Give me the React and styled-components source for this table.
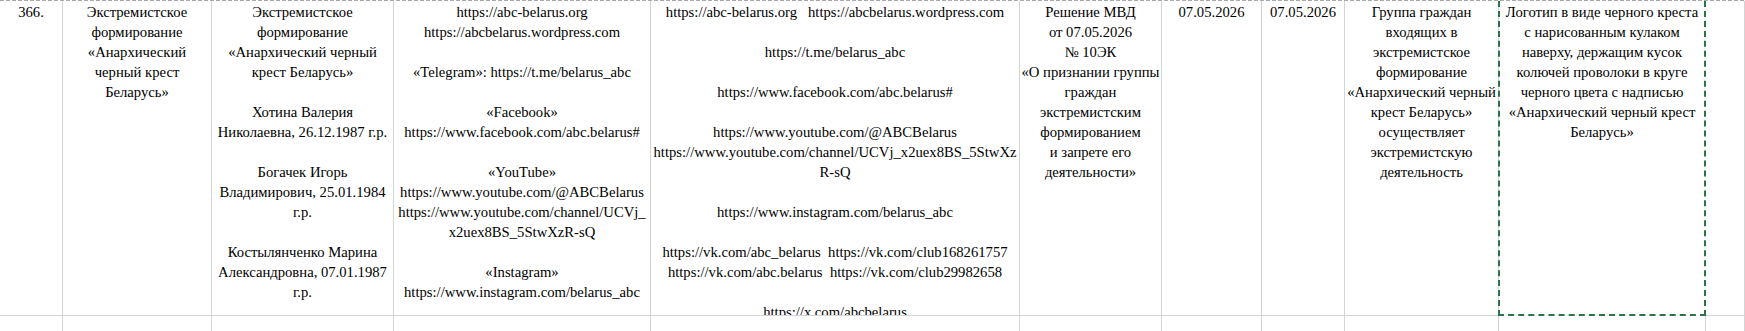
import React from 'react';
import styled, { createGlobalStyle } from 'styled-components';

const GlobalStyle = createGlobalStyle`
  html, body {
    margin: 0;
    padding: 0;
    background: #fff;
  }
  body {
    font-family: "Liberation Serif", "Times New Roman", "DejaVu Serif", serif;
    color: #000;
    overflow: hidden;
  }
`;

const COLS = '63px 149px 182px 257px 369px 142px 100px 83px 154px 207px 1fr';

const Sheet = styled.div`
  width: 1745px;
  height: 331px;
  overflow: hidden;
`;

const TopEdge = styled.div`
  height: 1px;
  background: repeating-linear-gradient(
    to right,
    #a9a9a9 0,
    #a9a9a9 4px,
    transparent 4px,
    transparent 6px
  );
`;

const Row = styled.div`
  display: grid;
  grid-template-columns: ${COLS};
  height: ${(p) => p.$height}px;
`;

const Cell = styled.div`
  box-sizing: border-box;
  border-right: 1px solid #d4d4d4;
  border-bottom: 1px solid #d4d4d4;
  padding-top: 1px;
  display: flex;
  flex-direction: column;
  align-items: center;
  overflow: hidden;
  font-family: "Liberation Serif", "Times New Roman", "DejaVu Serif", serif;
  font-size: 14.67px;
  line-height: 20px;
  color: #000;
  text-align: center;

  ${(p) =>
    p.$selected &&
    `
    border: 2px dashed #2b7448;
    border-top: none;
    margin-left: -1px;
    padding-top: 1px;
  `}
`;

const Line = styled.div`
  white-space: pre;
  min-height: 20px;
`;

const CellText = ({ lines, selected }) => (
  <Cell $selected={selected}>
    {lines.map((t, i) => (
      <Line key={i}>{t}</Line>
    ))}
  </Cell>
);

const record = [
  ['366.'],
  ['Экстремистское', 'формирование', '«Анархический', 'черный крест', 'Беларусь»'],
  [
    'Экстремистское',
    'формирование',
    '«Анархический черный',
    'крест Беларусь»',
    '',
    'Хотина Валерия',
    'Николаевна, 26.12.1987 г.р.',
    '',
    'Богачек Игорь',
    'Владимирович, 25.01.1984',
    'г.р.',
    '',
    'Костылянченко Марина',
    'Александровна, 07.01.1987',
    'г.р.',
  ],
  [
    'https://abc-belarus.org',
    'https://abcbelarus.wordpress.com',
    '',
    '«Telegram»: https://t.me/belarus_abc',
    '',
    '«Facebook»',
    'https://www.facebook.com/abc.belarus#',
    '',
    '«YouTube»',
    'https://www.youtube.com/@ABCBelarus',
    'https://www.youtube.com/channel/UCVj_',
    'x2uex8BS_5StwXzR-sQ',
    '',
    '«Instagram»',
    'https://www.instagram.com/belarus_abc',
  ],
  [
    'https://abc-belarus.org   https://abcbelarus.wordpress.com',
    '',
    'https://t.me/belarus_abc',
    '',
    'https://www.facebook.com/abc.belarus#',
    '',
    'https://www.youtube.com/@ABCBelarus',
    'https://www.youtube.com/channel/UCVj_x2uex8BS_5StwXz',
    'R-sQ',
    '',
    'https://www.instagram.com/belarus_abc',
    '',
    'https://vk.com/abc_belarus  https://vk.com/club168261757',
    'https://vk.com/abc.belarus  https://vk.com/club29982658',
    '',
    'https://x.com/abcbelarus',
  ],
  [
    'Решение МВД',
    'от 07.05.2026',
    '№ 10ЭК',
    '«О признании группы',
    'граждан',
    'экстремистским',
    'формированием',
    'и запрете его',
    'деятельности»',
  ],
  ['07.05.2026'],
  ['07.05.2026'],
  [
    'Группа граждан',
    'входящих в',
    'экстремистское',
    'формирование',
    '«Анархический черный',
    'крест Беларусь»',
    'осуществляет',
    'экстремистскую',
    'деятельность',
  ],
  [
    'Логотип в виде черного креста',
    'с нарисованным кулаком',
    'наверху, держащим кусок',
    'колючей проволоки в круге',
    'черного цвета с надписью',
    '«Анархический черный крест',
    'Беларусь»',
  ],
  [],
];

export default function App() {
  return (
    <>
      <GlobalStyle />
      <Sheet>
        <TopEdge />
        <Row $height={315}>
          {record.map((lines, i) => (
            <CellText key={i} lines={lines} selected={i === 9} />
          ))}
        </Row>
        <Row $height={40}>
          {record.map((_, i) => (
            <Cell key={i} />
          ))}
        </Row>
      </Sheet>
    </>
  );
}
